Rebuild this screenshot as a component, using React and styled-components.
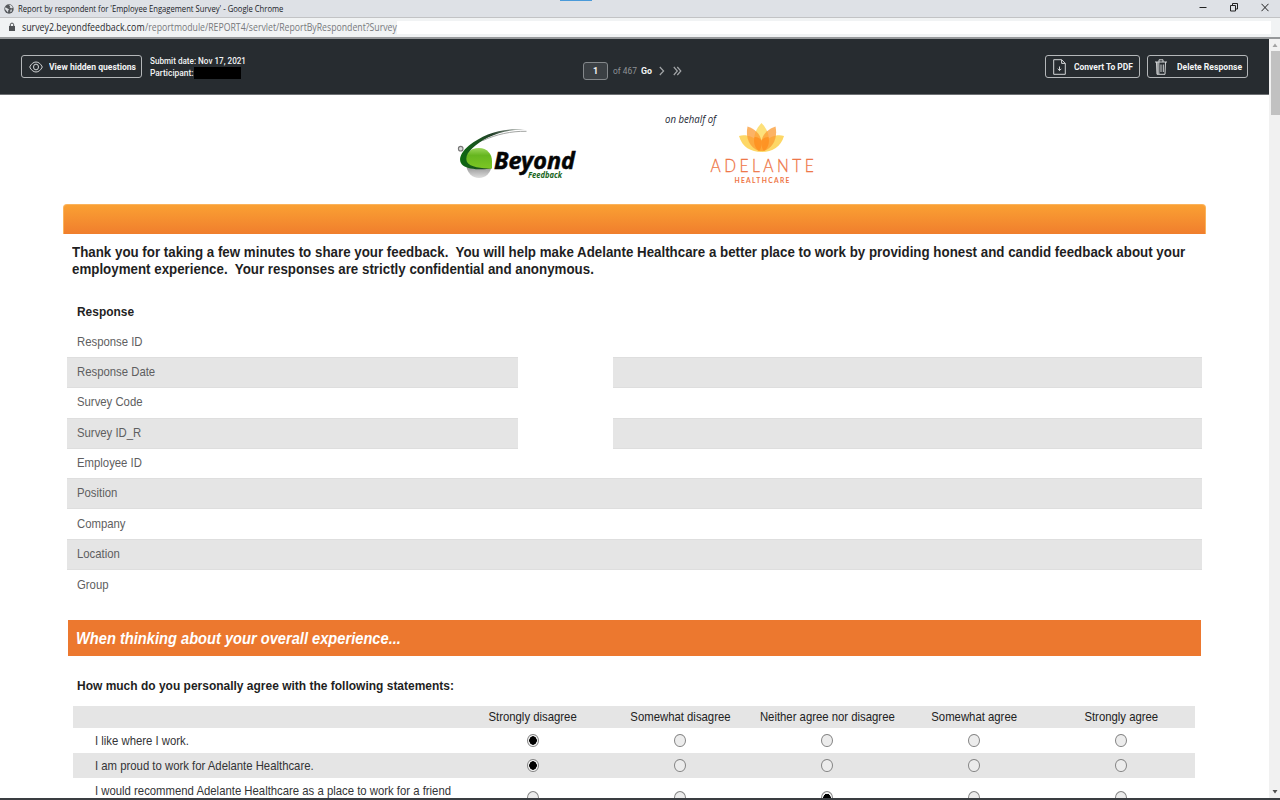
import React from "react";
import styled, { createGlobalStyle, css } from "styled-components";

const GlobalStyle = createGlobalStyle`
  * { box-sizing: border-box; }
  body {
    margin: 0;
    background: #fff;
    overflow: hidden;
    font-family: "Liberation Sans", Arial, sans-serif;
  }
`;

/* Horizontally condensed run of text; $k is the squeeze factor. */
const Condensed = styled.span`
  display: inline-block;
  white-space: pre;
  transform: scaleX(${(p) => p.$k || 0.872});
  transform-origin: ${(p) => (p.$centered ? "center" : "left")} center;
`;

const Window = styled.div`
  width: 1280px;
  height: 800px;
  display: flex;
  flex-direction: column;
  overflow: hidden;
  border-bottom: 2px solid #3a3d41;
`;

/* ---------- browser chrome ---------- */
const TitleBar = styled.div`
  flex: none;
  height: 18px;
  display: flex;
  align-items: center;
  padding: 0 11px 0 4px;
  background: linear-gradient(#4a9ad9, #4a9ad9) 560px 0 / 32px 1px no-repeat #dee1e6;
  border-bottom: 1px solid #c2c3c5;
`;
const TitleText = styled.div`
  flex: 1;
  margin-left: 4px;
  font: 9px/16px "Open Sans", sans-serif;
  color: #202226;
`;
const WindowControls = styled.div`
  display: flex;
  align-items: center;
  gap: 23px;
  margin-top: -2px;
`;
const AddressBar = styled.div`
  flex: none;
  height: 21px;
  display: flex;
  align-items: center;
  padding: 0 9px 1px 8px;
  background: #f1f3f4;
  border-bottom: 2px solid #96989a;
`;
const Url = styled.div`
  display: flex;
  width: 375px;
  margin-left: 6px;
  font: 10px/16px "Open Sans", sans-serif;
`;
const Host = styled.div`
  width: 123px;
  color: #26282b;
`;
const Path = styled.div`
  width: 252px;
  color: #77797c;
`;
const UrlBlank = styled.div`
  flex: 1;
  height: 13px;
  background: #fff;
`;

/* ---------- page frame ---------- */
const Viewport = styled.div`
  flex: 1;
  min-height: 0;
  display: flex;
`;
const Page = styled.div`
  width: 1269px;
  display: flex;
  flex-direction: column;
  overflow: hidden;
`;
const Scrollbar = styled.div`
  width: 11px;
  display: flex;
  flex-direction: column;
  align-items: center;
  padding: 4px 0 4px 1px;
  background: #f1f1f1;
`;
const Thumb = styled.div`
  width: 9px;
  height: 64px;
  margin: 4px 0 auto;
  background: #c1c1c1;
`;

/* ---------- report toolbar ---------- */
const Toolbar = styled.div`
  flex: none;
  height: 56px;
  display: flex;
  padding-left: 21px;
  background: #272c30;
  border-bottom: 1px solid #6d7073;
  font-family: Roboto, sans-serif;
  font-size: 9px;
  color: #f3f4f5;
`;
const ToolButton = styled.div`
  width: ${(p) => p.$width}px;
  height: 23px;
  margin: 16px ${(p) => p.$after || 0}px 0 0;
  padding-left: 7px;
  display: flex;
  align-items: center;
  border: 1px solid #b4b7b9;
  border-radius: 3px;
  font-weight: 700;
  white-space: nowrap;
`;
const ButtonIcon = styled.svg`
  flex: none;
  width: ${(p) => p.$width}px;
  height: 16px;
  margin-right: ${(p) => p.$gap}px;
  fill: none;
  stroke: #d3d5d6;
  stroke-width: 1;
`;
const Meta = styled.div`
  width: 433.5px;
  margin-left: 0.5px;
  padding-top: 16px;
  font-weight: 500;
  line-height: 12px;
`;
const MetaLine = styled.div`
  display: flex;
  align-items: center;
  height: 12px;
`;
const MetaLabel = styled.div`
  width: 44.5px;
`;
const Redacted = styled.div`
  width: 47px;
  height: 12px;
  background: #000;
`;
const Pager = styled.div`
  width: 462px;
  height: 18px;
  margin-top: 23px;
  display: flex;
  align-items: center;
`;
const PageInput = styled.div`
  width: 25px;
  height: 18px;
  margin-right: 5px;
  border: 1px solid #84888b;
  border-radius: 3px;
  background: #3b4044;
  line-height: 16px;
  text-align: center;
  font-weight: 700;
`;
const PageCount = styled.div`
  width: 28px;
  color: #8f9396;
`;
const Go = styled.div`
  width: 18px;
  font-weight: 700;
`;

/* ---------- survey ---------- */
const Logos = styled.div`
  flex: none;
  height: 109px;
  display: flex;
  padding: 15px 0 0 455px;
`;
const BeyondLogo = styled.svg`
  width: 125px;
  height: 75px;
  margin-right: 85px;
`;
const Behalf = styled.div`
  width: 41px;
  padding-top: 1px;
  font: italic 10px/16px "Open Sans", sans-serif;
  white-space: nowrap;
  color: #1d2735;
`;
const AdelanteLogo = styled.svg`
  width: 112px;
  height: 80px;
`;
const Banner = styled.div`
  flex: none;
  width: 1142.5px;
  height: 30px;
  margin-left: 63px;
  border: 1px solid #fbb35b;
  border-bottom: 0;
  border-radius: 4px 4px 0 0;
  background: linear-gradient(#faa033, #f07e2d);
`;
const Intro = styled.div`
  flex: none;
  height: 67px;
  padding: 9px 0 0 72px;
  font-size: 15px;
  font-weight: 700;
  line-height: 17px;
  color: #1f1f1f;
`;
const ResponseTitle = styled.div`
  flex: none;
  height: 25.5px;
  padding-left: 77px;
  font-size: 13.5px;
  font-weight: 700;
  line-height: 22px;
  color: #1f1f1f;
`;
const ResponseList = styled.div`
  flex: none;
  width: 1135.5px;
  margin-left: 66.5px;
`;
const ResponseRow = styled.div`
  display: flex;
  gap: ${(p) => (p.$split ? 95 : 0)}px;
  height: 30.4px;
`;
const shade = css`
  height: 31px;
  background: #e5e5e5;
  border-top: 1px solid #dedede;
  border-bottom: 1px solid #dedede;
`;
const ResponseName = styled.div`
  width: 451.5px;
  padding-left: 10.5px;
  font-size: 13px;
  line-height: 27.4px;
  color: #5e5e60;
  border-top: 1px solid transparent;
  ${(p) => p.$shaded && shade}
`;
const ResponseValue = styled.div`
  flex: 1;
  ${(p) => p.$shaded && shade}
`;
const SectionTitle = styled.div`
  flex: none;
  width: 1133px;
  height: 36px;
  margin: 20px 0 0 68.4px;
  padding-left: 7.5px;
  background: #ec782f;
  font-size: 16.5px;
  font-style: italic;
  font-weight: 700;
  line-height: 36px;
  color: #fff;
`;
const Question = styled.div`
  flex: none;
  height: 49.8px;
  padding: 19px 0 0 77px;
  font-size: 13.5px;
  font-weight: 700;
  line-height: 22px;
  color: #1f1f1f;
`;
const Matrix = styled.div`
  flex: none;
  width: 1122px;
  margin-left: 73px;
  font-size: 13px;
  color: #333436;
`;
const MatrixRow = styled.div`
  display: grid;
  grid-template-columns: 386.5px repeat(5, 147.1px);
  align-items: center;
  height: ${(p) => p.$height}px;
  background: ${(p) => (p.$shaded ? "#e5e5e5" : "#fff")};
`;
const ColumnName = styled.div`
  display: flex;
  justify-content: center;
  line-height: 20px;
  color: #222;
`;
const Statement = styled.div`
  padding-left: 21.8px;
  line-height: 25px;
  align-self: start;
`;
const Radio = styled.div`
  justify-self: center;
  width: 12px;
  height: 13.5px;
  border: 1px solid #858585;
  border-radius: 50%;
  background: ${(p) =>
    p.$checked
      ? "radial-gradient(ellipse 4px 4.5px at center, #000 88%, #f2f2f2 100%)"
      : "#ececec"};
`;

const responses = [
  ["Response ID", false],
  ["Response Date", true],
  ["Survey Code", false],
  ["Survey ID_R", true],
  ["Employee ID", false],
  ["Position", false],
  ["Company", false],
  ["Location", false],
  ["Group", false],
];
const answers = [
  "Strongly disagree",
  "Somewhat disagree",
  "Neither agree nor disagree",
  "Somewhat agree",
  "Strongly agree",
];
const statements = [
  { text: "I like where I work.", answer: 0, height: 25.2 },
  { text: "I am proud to work for Adelante Healthcare.", answer: 0, height: 25.2 },
  {
    text: "I would recommend Adelante Healthcare as a place to work for a friend",
    answer: 2,
    height: 40,
  },
];

function Globe() {
  return (
    <svg width="10" height="10" viewBox="0 0 10 10">
      <circle cx="5" cy="5" r="4.7" fill="#55585c" />
      <path d="M1.4 3.2 3.6 4.4 5 5.2 4.2 6.4 4 8.4 2.2 6.6 1 5ZM5 1.2 6.2 2.4 5.6 3.6 7.2 4.2 8.8 4 8.2 2.2 6.6 1Z" fill="#dcdfe3" />
      <path d="M6.4 5.8 8 5.6 7.6 7.4 6.4 8.2Z" fill="#dcdfe3" />
    </svg>
  );
}

function BeyondMark() {
  return (
    <BeyondLogo viewBox="455 110 125 75">
      <defs>
        <linearGradient id="green" x1="0" y1="0" x2="0" y2="1">
          <stop offset="0" stopColor="#9bd65a" />
          <stop offset="0.35" stopColor="#66b61f" />
          <stop offset="1" stopColor="#7dc724" />
        </linearGradient>
        <linearGradient id="silver" x1="0" y1="0" x2="0" y2="1">
          <stop offset="0.6" stopColor="#9a9a9a" />
          <stop offset="1" stopColor="#dedede" />
        </linearGradient>
        <linearGradient id="swoosh" x1="0" y1="0" x2="1" y2="0">
          <stop offset="0" stopColor="#0c6a10" />
          <stop offset="0.5" stopColor="#24402a" />
          <stop offset="1" stopColor="#c4c4c4" />
        </linearGradient>
      </defs>
      <ellipse cx="479" cy="165" rx="12.5" ry="13" fill="url(#silver)" />
      <path d="M465.500 165C463 154 470 148 479 148C487 148 492 154 492 161V168.500Q478 170.500 465.500 165Z" fill="url(#green)" />
      <path d="M525 129.800C503 127.500 484 134 469 145.500C459 154 458 161.500 463 165.500C469 169.800 483 170 492 168.500C481 168.500 470 167 467 162C463.500 154 474 145 488 137.500C500 131.500 512 129.500 525 129.800Z" fill="url(#swoosh)" />
      <path d="M483 140.500C496 134.500 511 131 526.500 131.300" fill="none" stroke="#a3a5a3" strokeWidth="1" />
      <circle cx="460.7" cy="148.700" r="2.300" fill="#d9d9d9" stroke="#777" strokeWidth="1.100" />
      <text x="494" y="168.500" textLength="81" lengthAdjust="spacingAndGlyphs" fontFamily="Noto Sans, sans-serif" fontSize="23.500" fontWeight="700" fontStyle="italic" fill="#050505" stroke="#050505" strokeWidth="0.500">Beyond</text>
      <text x="528" y="177.500" textLength="34" lengthAdjust="spacingAndGlyphs" fontFamily="Noto Sans, sans-serif" fontSize="8.500" fontWeight="700" fontStyle="italic" fill="#17651b">Feedback</text>
    </BeyondLogo>
  );
}

function AdelanteMark() {
  return (
    <AdelanteLogo viewBox="706 110 112 80">
      <path d="M761.5 123C767 129 769 134 769 141C769 146 766 149 761.5 152C757 149 754 146 754 141C754 134 756 129 761.5 123Z" fill="#fde07a" />
      <path d="M739 136C746 134 754 137 758 142C761 146 762 149 761.5 152C751 152 742 147 739 136Z" fill="#fdd766" />
      <path d="M784 136C777 134 769 137 765 142C762 146 761 149 761.5 152C772 152 781 147 784 136Z" fill="#fdd766" />
      <path d="M747.5 126.500C755 129 760 134 761.5 140.500C762 145 761 149 759 151C750 148 745 138 747.500 126.500Z" fill="#fb9a32" fillOpacity=".75" />
      <path d="M775.500 126.500C768 129 763 134 761.5 140.500C761 145 762 149 764 151C773 148 778 138 775.500 126.500Z" fill="#fb9a32" fillOpacity=".75" />
      <path d="M754.500 137C758 137 761 139 761.500 141C762 139 765 137 768.500 137C770 143 768 148 764 151H759C755 148 753 143 754.500 137Z" fill="#ff8612" fillOpacity=".6" />
      <g transform="translate(710.5 171.5) scale(.84 1)" fill="#ee7444" fontFamily="Lato, sans-serif">
        <text textLength="123" lengthAdjust="spacing" fontSize="18.500" fontWeight="300" stroke="#ee7444" strokeWidth="0.300">ADELANTE</text>
        <text x="28.500" y="11.900" textLength="65.500" lengthAdjust="spacing" fontSize="8" fontWeight="700">HEALTHCARE</text>
      </g>
    </AdelanteLogo>
  );
}

export default function App() {
  return (
    <Window>
      <GlobalStyle />
      <TitleBar>
        <Globe />
        <TitleText>
          <Condensed $k={0.85}>Report by respondent for 'Employee Engagement Survey' - Google Chrome</Condensed>
        </TitleText>
        <WindowControls>
          <svg width="8" height="9" viewBox="0 0 8 9"><path d="M0.500 4.500H7.500" stroke="#222" /></svg>
          <svg width="8" height="9" viewBox="0 0 8 9" fill="none" stroke="#222"><path d="M0.500 2.500H5.500V8H0.500ZM2.500 2.500V0.500H7.500V6H5.500" /></svg>
          <svg width="8" height="9" viewBox="0 0 8 9"><path d="M0.500 0.800 7.500 8.200M7.500 0.800 0.500 8.200" stroke="#222" /></svg>
        </WindowControls>
      </TitleBar>
      <AddressBar>
        <svg width="8" height="10" viewBox="0 0 8 10">
          <path d="M1 4H7V9H1Z" fill="#505356" />
          <path d="M2.300 4.200V2.800Q2.300 1.100 4 1.100T5.700 2.800V4.200" fill="none" stroke="#505356" />
        </svg>
        <Url>
          <Host><Condensed $k={0.881}>survey2.beyondfeedback.com</Condensed></Host>
          <Path><Condensed $k={0.872}>/reportmodule/REPORT4/servlet/ReportByRespondent?Survey</Condensed></Path>
        </Url>
        <UrlBlank />
      </AddressBar>

      <Viewport>
        <Page>
          <Toolbar>
            <ToolButton $width={121} $after={7}>
              <ButtonIcon $width={14} $gap={5.5} viewBox="0 0 14 16">
                <path d="M0.700 8C2.200 4.800 4.500 3 7 3S11.800 4.800 13.300 8C11.800 11.200 9.500 13 7 13S2.200 11.200 0.700 8Z" />
                <ellipse cx="7" cy="8" rx="2.500" ry="2.900" />
              </ButtonIcon>
              <Condensed $k={0.951}>View hidden questions</Condensed>
            </ToolButton>
            <Meta>
              <MetaLine><Condensed $k={0.903}>Submit date: Nov 17, 2021</Condensed></MetaLine>
              <MetaLine>
                <MetaLabel><Condensed $k={0.935}>Participant:</Condensed></MetaLabel>
                <Redacted />
              </MetaLine>
            </Meta>
            <Pager>
              <PageInput>1</PageInput>
              <PageCount><Condensed $k={0.935}>of 467</Condensed></PageCount>
              <Go><Condensed $k={0.98}>Go</Condensed></Go>
              <svg width="24" height="10" viewBox="0 0 24 10" fill="none" stroke="#a3a6a8" strokeWidth="1.200">
                <path d="M0.800 1 4.600 5 0.800 9M14.800 1 18.300 5 14.800 9M18.300 1 21.800 5 18.300 9" />
              </svg>
            </Pager>
            <ToolButton $width={95} $after={7}>
              <ButtonIcon $width={13} $gap={8} viewBox="0 0 13 16">
                <path d="M0.700 0.700H8.600L12.300 4.400V15.300H0.700ZM8.600 0.700V4.400H12.300M6.500 7.500V11.500M4.700 9.800 6.500 11.600 8.300 9.800" />
              </ButtonIcon>
              <Condensed $k={0.941}>Convert To PDF</Condensed>
            </ToolButton>
            <ToolButton $width={101}>
              <ButtonIcon $width={12} $gap={9.5} viewBox="0 0 12 16">
                <path d="M1.500 3H4.500V15H2Z" fill="#9a9d9f" stroke="none" />
                <path d="M0 3H12M4 3V0.800H8V3M1.500 3 2 15.300H10L10.500 3M6 5.500V13M8.300 5.500V13" />
              </ButtonIcon>
              <Condensed $k={0.956}>Delete Response</Condensed>
            </ToolButton>
          </Toolbar>

          <Logos>
            <BeyondMark />
            <Behalf><Condensed $k={0.96}>on behalf of</Condensed></Behalf>
            <AdelanteMark />
          </Logos>
          <Banner />
          <Intro>
            <Condensed $k={0.8888}>Thank you for taking a few minutes to share your feedback.  You will help make Adelante Healthcare a better place to work by providing honest and candid feedback about your</Condensed>
            <Condensed $k={0.8888}>employment experience.  Your responses are strictly confidential and anonymous.</Condensed>
          </Intro>

          <ResponseTitle><Condensed $k={0.884}>Response</Condensed></ResponseTitle>
          <ResponseList>
            {responses.map(([name, split], i) => (
              <ResponseRow key={name} $split={split}>
                <ResponseName $shaded={i % 2 === 1}><Condensed>{name}</Condensed></ResponseName>
                <ResponseValue $shaded={i % 2 === 1} />
              </ResponseRow>
            ))}
          </ResponseList>

          <SectionTitle><Condensed $k={0.888}>When thinking about your overall experience...</Condensed></SectionTitle>
          <Question><Condensed $k={0.888}>How much do you personally agree with the following statements:</Condensed></Question>
          <Matrix>
            <MatrixRow $height={22} $shaded>
              <span />
              {answers.map((a) => (
                <ColumnName key={a}><Condensed $centered>{a}</Condensed></ColumnName>
              ))}
            </MatrixRow>
            {statements.map((s, row) => (
              <MatrixRow key={s.text} $height={s.height} $shaded={row === 1}>
                <Statement><Condensed>{s.text}</Condensed></Statement>
                {answers.map((a, i) => (
                  <Radio key={a} $checked={s.answer === i} />
                ))}
              </MatrixRow>
            ))}
          </Matrix>
        </Page>
        <Scrollbar>
          <svg width="6" height="4" viewBox="0 0 6 4"><path d="M0.500 4 3 0.500 5.500 4Z" fill="#a3a3a3" /></svg>
          <Thumb />
          <svg width="6" height="4" viewBox="0 0 6 4"><path d="M0.500 0 3 3.500 5.500 0Z" fill="#505050" /></svg>
        </Scrollbar>
      </Viewport>
    </Window>
  );
}
